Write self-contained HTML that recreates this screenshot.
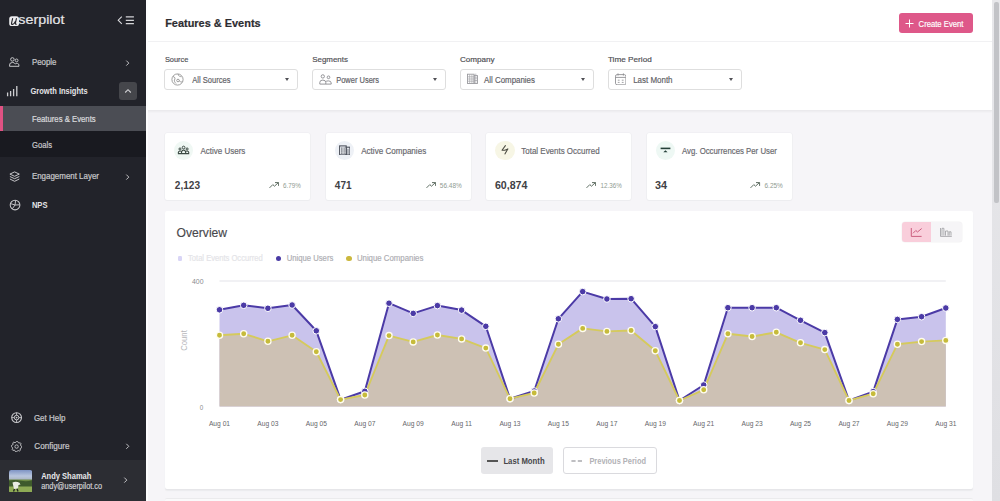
<!DOCTYPE html>
<html><head><meta charset="utf-8">
<style>
*{margin:0;padding:0;box-sizing:border-box}
html,body{width:1000px;height:501px;overflow:hidden;background:#f4f4f6;font-family:"Liberation Sans",sans-serif}
svg text{font-family:"Liberation Sans",sans-serif;white-space:pre}
.abs{position:absolute}
#sb{position:absolute;left:0;top:0;width:146px;height:501px;background:#22232a}
.sbt{position:absolute;color:#c9c9cc;font-size:8.6px;white-space:nowrap}
.sbb{font-weight:bold;color:#e6e6e8}
#main{position:absolute;left:146px;top:0;width:846px;height:501px;background:#f6f5f8}
#hdr{position:absolute;left:0;top:0;width:846px;height:110px;background:#fff;box-shadow:0 0.5px 0 #e9e9eb,0 2px 2px rgba(0,0,0,0.045)}
.lbl{position:absolute;font-size:8.2px;color:#555;white-space:nowrap}
.dd{position:absolute;width:134px;height:21.6px;border:1px solid #dedede;border-radius:3px;background:#fff}
.ddt{position:absolute;left:27px;top:5.5px;font-size:8.2px;color:#555;white-space:nowrap}
.caret{position:absolute;right:8.4px;top:8.4px;width:0;height:0;border-left:2.8px solid transparent;border-right:2.8px solid transparent;border-top:3px solid #505055}
.card{position:absolute;top:132.6px;width:145px;height:67.4px;background:#fff;border-radius:2px;box-shadow:0 0 0 0.6px #ececef,0 1px 1px rgba(0,0,0,0.03)}
.ci{position:absolute;left:9px;top:8px;width:19px;height:19px;border-radius:50%}
.ct{position:absolute;left:36px;top:13px;font-size:8.4px;color:#666;white-space:nowrap}
.cv{position:absolute;left:9px;top:47px;font-size:10.4px;font-weight:bold;color:#444;white-space:nowrap}
.cp{position:absolute;right:9px;top:49px;font-size:6px;color:#999;white-space:nowrap}
.tr{position:absolute;top:47px}
#ov{position:absolute;left:19px;top:210.5px;width:808px;height:278.5px;background:#fff;border-radius:2px;box-shadow:0 1px 0 #e6e6e9,0 2px 1px #ececee}
.xl{position:absolute;top:421.1px;font-size:6.7px;line-height:6.7px;color:#66666a;white-space:nowrap;transform:translateX(-50%)}
.tx{position:absolute;white-space:nowrap}
#scr{position:absolute;left:991.5px;top:0;width:8.5px;height:501px;background:linear-gradient(#e8e8eb,#dfdfe3)}
#thumb{position:absolute;left:994px;top:2px;width:4.5px;height:201px;background:#c2c3c7;border-radius:2px}
</style></head><body>
<div id="sb">
  <!-- logo -->
  <svg class="abs" style="left:9px;top:15.5px" width="11" height="11" viewBox="0 0 11 11">
    <rect x="0.2" y="0.3" width="9.8" height="9.8" rx="2.6" fill="#ececee"/>
    <path d="M3.6 2.6 L2.6 6.8 Q2.2 8.6 3.6 8.4 Q5.2 8.1 6.2 5.6 M7.4 2.6 L6.4 7 Q6.2 8.3 7.2 8.2" fill="none" stroke="#25252b" stroke-width="1.15" stroke-linecap="round"/>
  </svg>
  
  
  <!-- collapse icon -->
  <svg class="abs" style="left:110px;top:10px" width="30" height="20" viewBox="0 0 30 20">
    <path d="M11.8 6.6 L8.2 10.2 L11.8 13.8" fill="none" stroke="#dcdcdf" stroke-width="1.05"/>
    <path d="M15.8 6.9H23.9M15.8 10.4H23.9M15.8 13.6H23.9" stroke="#d4d4d7" stroke-width="1.25"/>
  </svg>
  <!-- People -->
  <svg class="abs" style="left:8px;top:56px" width="12" height="12" viewBox="0 0 12 12">
    <circle cx="4.4" cy="3.4" r="1.75" fill="none" stroke="#c6c6c9" stroke-width="1"/>
    <circle cx="8.6" cy="4.4" r="1.4" fill="none" stroke="#c6c6c9" stroke-width="1"/>
    <path d="M1.5 10.3 Q0.9 6.6 4.3 6.4 Q6.6 6.4 7.3 8 Q8 7.2 9.3 7.3 Q11.3 7.6 11 10.3 Z" fill="none" stroke="#c6c6c9" stroke-width="1" stroke-linejoin="round"/>
  </svg>
  <svg class="abs" style="left:125px;top:60px" width="6" height="7" viewBox="0 0 6 7"><path d="M1.3 0.6 L3.8 3.1 L1.3 5.6" fill="none" stroke="#c0c0c3" stroke-width="1"/></svg>
  <!-- Growth -->
  <svg class="abs" style="left:6px;top:85px" width="13" height="12" viewBox="0 0 13 12">
    <path d="M1.6 11.2V7.6M4.6 11.2V6.1M7.6 11.2V4.1M10.8 11.2V1.1" stroke="#cfcfd2" stroke-width="1.3"/>
  </svg>
  <div class="abs" style="left:119px;top:82px;width:17.5px;height:18px;background:#45464b;border-radius:3px"></div>
  <svg class="abs" style="left:124px;top:88px" width="8" height="6" viewBox="0 0 8 6"><path d="M1.2 4.5 L4 1.7 L6.8 4.5" fill="none" stroke="#d0d0d3" stroke-width="1.1"/></svg>
  <!-- submenu -->
  <div class="abs" style="left:0;top:106px;width:146px;height:25px;background:#4b4d54"></div>
  <div class="abs" style="left:0;top:106px;width:2.5px;height:25px;background:#e05283"></div>
  <div class="abs" style="left:0;top:131px;width:146px;height:26px;background:#191a20"></div>
  <!-- Engagement -->
  <svg class="abs" style="left:8.5px;top:170.5px" width="11.5" height="11.5" viewBox="0 0 11.5 11.5">
    <path d="M5.6 0.9 L10.3 3.1 L5.6 5.3 L0.9 3.1Z" fill="none" stroke="#c6c6c9" stroke-width="1" stroke-linejoin="round"/>
    <path d="M0.9 5.5 L5.6 7.7 L10.3 5.5 M0.9 8 L5.6 10.3 L10.3 8" fill="none" stroke="#c6c6c9" stroke-width="1" stroke-linejoin="round"/>
  </svg>
  <svg class="abs" style="left:125px;top:173.5px" width="6" height="7" viewBox="0 0 6 7"><path d="M1.3 0.6 L3.8 3.1 L1.3 5.6" fill="none" stroke="#c0c0c3" stroke-width="1"/></svg>
  <!-- NPS -->
  <svg class="abs" style="left:9px;top:198.5px" width="12" height="12" viewBox="0 0 12 12">
    <circle cx="6.05" cy="6" r="4.85" fill="none" stroke="#c6c6c9" stroke-width="1.05"/>
    <path d="M6.05 6 L6.6 1.3 M6.05 6 L1.8 4.7 M6.05 6 L10.8 5.8 M6.05 6 L3.3 9.8" fill="none" stroke="#c6c6c9" stroke-width="0.95"/>
  </svg>
  <!-- Get help -->
  <svg class="abs" style="left:10.9px;top:412.4px" width="11.2" height="11.2" viewBox="0 0 11.2 11.2">
    <circle cx="5.6" cy="5.6" r="4.9" fill="none" stroke="#c6c6c9" stroke-width="1.1"/>
    <circle cx="5.6" cy="5.6" r="2.3" fill="none" stroke="#c6c6c9" stroke-width="1"/>
    <circle cx="5.6" cy="5.6" r="0.9" fill="#c6c6c9"/>
    <path d="M5.6 0.7V3.3M5.6 7.9V10.5M0.7 5.6H3.3M7.9 5.6H10.5" stroke="#c6c6c9" stroke-width="0.9"/>
  </svg>
  <!-- Configure -->
  <svg class="abs" style="left:11px;top:440.6px" width="11.2" height="11.2" viewBox="0 0 11.2 11.2">
    <path d="M10.90 5.60 L10.80 6.63 L9.57 7.25 L9.18 7.99 L9.35 9.35 L8.54 10.01 L7.25 9.57 L6.44 9.82 L5.60 10.90 L4.57 10.80 L3.95 9.57 L3.21 9.18 L1.85 9.35 L1.19 8.54 L1.63 7.25 L1.38 6.44 L0.30 5.60 L0.40 4.57 L1.63 3.95 L2.02 3.21 L1.85 1.85 L2.66 1.19 L3.95 1.63 L4.76 1.38 L5.60 0.30 L6.63 0.40 L7.25 1.63 L7.99 2.02 L9.35 1.85 L10.01 2.66 L9.57 3.95 L9.82 4.76Z" fill="none" stroke="#c6c6c9" stroke-width="0.95" stroke-linejoin="round"/>
    <circle cx="5.6" cy="5.6" r="1.7" fill="none" stroke="#c6c6c9" stroke-width="0.9"/>
  </svg>
  <svg class="abs" style="left:125px;top:443px" width="6" height="7" viewBox="0 0 6 7"><path d="M1.3 0.8 L3.8 3.3 L1.3 5.8" fill="none" stroke="#c0c0c3" stroke-width="1"/></svg>
  <!-- user -->
  <div class="abs" style="left:0;top:460px;width:146px;height:41px;background:#2c2d33"></div>
  <svg class="abs" style="left:9px;top:469.5px" width="23.3" height="22.8" viewBox="0 0 23.3 22.8">
    <defs>
      <linearGradient id="sky" x1="0" y1="0" x2="0" y2="1"><stop offset="0" stop-color="#7e93c4"/><stop offset="0.6" stop-color="#b9c6de"/><stop offset="1" stop-color="#a9b3c0"/></linearGradient>
      <clipPath id="avc"><rect x="0" y="0" width="23.3" height="22.8" rx="2.2"/></clipPath>
    </defs>
    <g clip-path="url(#avc)">
      <rect x="0" y="0" width="23.3" height="10" fill="url(#sky)"/>
      <rect x="0" y="9.5" width="23.3" height="13.3" fill="#6d8a45"/>
      <path d="M0 10.5 Q6 9.6 12 10.8 T23.3 10.2 V18 H0Z" fill="#3e5a2c"/>
      <rect x="0" y="16.5" width="23.3" height="6.3" fill="#8eaa55"/>
      <path d="M3.5 12.5 Q7 11 10.5 12.8 L11.5 14.5 L9.5 15 L9 18.5 L5 19 Z" fill="#e9ebe2"/>
      <path d="M5.5 19 L4.5 21.5 M8 18.8 L9 21.5" stroke="#252a20" stroke-width="1.4"/>
    </g>
  </svg>
  <svg class="abs" style="left:123.2px;top:477.4px" width="6" height="7" viewBox="0 0 6 7"><path d="M1.3 0.6 L3.8 3.1 L1.3 5.6" fill="none" stroke="#c5c5c8" stroke-width="1"/></svg>
</div>

<div id="main">
  <div id="hdr">
    
    <div class="abs" style="left:0;top:41px;width:846px;height:1px;background:#f1f1f3"></div>
    <div class="abs" style="left:753px;top:13.2px;width:74px;height:19.6px;background:#de5889;border-radius:3px"></div>
    <svg class="abs" style="left:759px;top:18.5px" width="9" height="9" viewBox="0 0 9 9"><path d="M4.5 0.5V8.5M0.5 4.5H8.5" stroke="#fff" stroke-width="1"/></svg>
    

    <div class="dd" style="left:18px;top:68.5px">
      <svg class="abs" style="left:6px;top:3.5px" width="13" height="13" viewBox="0 0 13 13">
        <circle cx="6.5" cy="6.5" r="5.6" fill="none" stroke="#888" stroke-width="0.8"/>
        <path d="M2 3.5 C4 4 4.5 5.5 3.5 7 C3 8 4 9.5 5 10.5 M7 1 C7 3 9 3.5 10.5 3.8 M8 7.5 C9 8.5 10 9.5 11.5 8.5" fill="none" stroke="#888" stroke-width="0.8"/>
        <circle cx="7" cy="7.5" r="1.3" fill="none" stroke="#888" stroke-width="0.8"/>
      </svg>
      <div class="caret"></div>
    </div>
    <div class="dd" style="left:166px;top:68.5px">
      <svg class="abs" style="left:5.5px;top:4px" width="13" height="11" viewBox="0 0 13 11">
        <circle cx="3.8" cy="2.4" r="1.65" fill="none" stroke="#8a8a8e" stroke-width="0.9"/>
        <circle cx="9.5" cy="3.3" r="1.35" fill="none" stroke="#8a8a8e" stroke-width="0.9"/>
        <path d="M0.8 10.1 V8.4 Q0.8 6.1 3.8 6.1 Q6.8 6.1 6.8 8.4 V10.1 Z M6.8 7.6 Q7.4 6.9 9.5 6.9 Q12.2 6.9 12.2 9 V10.1 H6.8" fill="none" stroke="#8a8a8e" stroke-width="0.9" stroke-linejoin="round"/>
      </svg>
      <div class="caret"></div>
    </div>
    <div class="dd" style="left:314px;top:68.5px">
      <svg class="abs" style="left:6.2px;top:3.4px" width="11" height="11" viewBox="0 0 11 11">
        <rect x="0.5" y="1.2" width="6.6" height="9.3" fill="none" stroke="#9a9a9e" stroke-width="0.9"/>
        <rect x="7.1" y="2.6" width="3.4" height="7.9" fill="none" stroke="#9a9a9e" stroke-width="0.9"/>
        <path d="M2.7 1.5V10.2M4.9 1.5V10.2M8.8 2.8V10.2M0.8 3.8H6.8M0.8 6H6.8M0.8 8.2H6.8M7.3 5H10.3M7.3 7.5H10.3M8.8 2.6V0.6" stroke="#a5a5a9" stroke-width="0.7"/>
      </svg>
      <div class="caret"></div>
    </div>
    <div class="dd" style="left:462px;top:68.5px">
      <svg class="abs" style="left:5.6px;top:3.4px" width="11.5" height="12.5" viewBox="0 0 11.5 12.5">
        <rect x="0.5" y="1.6" width="10.4" height="10.2" rx="1.6" fill="none" stroke="#8a8a8e" stroke-width="0.85"/>
        <path d="M0.6 4.4H10.8M3 0.4V2.6M8.4 0.4V2.6" stroke="#8a8a8e" stroke-width="0.85"/>
        <path d="M2.8 7.2h1.8M2.8 9.4h1.8M6.8 7.2h1.8M6.8 9.4h1.8" stroke="#8a8a8e" stroke-width="0.8"/>
      </svg>
      <div class="caret"></div>
    </div>
  </div>

  <!-- cards -->
  <div class="card" style="left:19.0px"></div>
  <div class="card" style="left:179.7px"></div>
  <div class="card" style="left:340.3px"></div>
  <div class="card" style="left:501.0px"></div>
  <!-- overview -->
  <div id="ov"></div>
  <div class="abs" style="left:19px;top:497.5px;width:808px;height:10px;background:#fafafb;border-top:1px solid #ebebed;border-radius:2px"></div>
</div>

<!-- overview content in page coords -->

<div class="abs" style="left:901.7px;top:222.1px;width:60px;height:19.7px;border-radius:3px;background:#f6f5f7;box-shadow:0 0 0.5px 0.5px rgba(0,0,0,0.05)"></div>
<div class="abs" style="left:901.7px;top:222.1px;width:29.6px;height:19.7px;border-radius:3px 0 0 3px;background:#f9cedb"></div>
<svg class="abs" style="left:908px;top:225px" width="17" height="14" viewBox="0 0 17 14">
  <path d="M3.3 3V11.4H13.6" fill="none" stroke="#c9577a" stroke-width="0.95"/>
  <path d="M5 8.3 L7.8 5.5 L9.5 7 L13.7 3.5" fill="none" stroke="#c9577a" stroke-width="0.95"/>
</svg>
<svg class="abs" style="left:938px;top:225px" width="17" height="14" viewBox="0 0 17 14">
  <path d="M2.5 3V11.4H13.8" fill="none" stroke="#9c9ca0" stroke-width="0.8"/>
  <path d="M4 10.6V3.3H5.9V10.6M7.5 10.6V6H10V10.6M11.2 10.6V6.8H13V10.6" fill="none" stroke="#9c9ca0" stroke-width="0.8"/>
</svg>

<!-- legend -->
<div class="abs" style="left:178.1px;top:256.3px;width:4.3px;height:4.3px;border-radius:1.2px;background:#d9d5f6"></div>

<div class="abs" style="left:275.9px;top:255.7px;width:5.4px;height:5.4px;border-radius:50%;background:#4a3ba5"></div>

<div class="abs" style="left:346.3px;top:255.7px;width:5.4px;height:5.4px;border-radius:50%;background:#cbb83e"></div>


<!-- axes labels -->




<svg class="abs" style="left:0;top:0" width="1000" height="501" viewBox="0 0 1000 501">
<line x1="219.5" y1="281" x2="945.8" y2="281" stroke="#ededf0" stroke-width="1.3"/>
<polygon points="219.5,406.5 219.5,309.8 243.7,305.3 267.9,308.3 292.1,305.0 316.3,330.8 340.6,399.6 364.8,391.3 389.0,303.2 413.2,313.4 437.4,305.6 461.6,310.1 485.8,326.3 510.0,398.7 534.2,391.0 558.4,318.8 582.7,291.6 606.9,299.0 631.1,298.7 655.3,326.6 679.5,400.5 703.7,385.0 727.9,307.7 752.1,307.7 776.3,307.7 800.5,320.3 824.8,332.6 849.0,400.5 873.2,391.6 897.4,319.4 921.6,316.7 945.8,308.0 945.8,406.5" fill="#c9c3ec"/>
<polygon points="219.5,406.5 219.5,335.3 243.7,333.8 267.9,341.3 292.1,335.3 316.3,351.7 340.6,399.6 364.8,395.0 389.0,335.6 413.2,341.9 437.4,335.0 461.6,338.9 485.8,348.1 510.0,398.7 534.2,393.0 558.4,344.3 582.7,328.4 606.9,331.4 631.1,330.5 655.3,350.8 679.5,400.5 703.7,389.8 727.9,333.8 752.1,336.5 776.3,332.3 800.5,342.8 824.8,349.6 849.0,400.5 873.2,393.7 897.4,344.3 921.6,341.6 945.8,340.4 945.8,406.5" fill="#cdc1b4"/>
<polyline points="219.5,309.8 243.7,305.3 267.9,308.3 292.1,305.0 316.3,330.8 340.6,399.6 364.8,391.3 389.0,303.2 413.2,313.4 437.4,305.6 461.6,310.1 485.8,326.3 510.0,398.7 534.2,391.0 558.4,318.8 582.7,291.6 606.9,299.0 631.1,298.7 655.3,326.6 679.5,400.5 703.7,385.0 727.9,307.7 752.1,307.7 776.3,307.7 800.5,320.3 824.8,332.6 849.0,400.5 873.2,391.6 897.4,319.4 921.6,316.7 945.8,308.0" fill="none" stroke="#4b3aa6" stroke-width="2" stroke-linejoin="round"/>
<polyline points="219.5,335.3 243.7,333.8 267.9,341.3 292.1,335.3 316.3,351.7 340.6,399.6 364.8,395.0 389.0,335.6 413.2,341.9 437.4,335.0 461.6,338.9 485.8,348.1 510.0,398.7 534.2,393.0 558.4,344.3 582.7,328.4 606.9,331.4 631.1,330.5 655.3,350.8 679.5,400.5 703.7,389.8 727.9,333.8 752.1,336.5 776.3,332.3 800.5,342.8 824.8,349.6 849.0,400.5 873.2,393.7 897.4,344.3 921.6,341.6 945.8,340.4" fill="none" stroke="#d5ca5c" stroke-width="1.9" stroke-linejoin="round"/>
<circle cx="219.5" cy="309.8" r="3.3" fill="#4b3aa6" stroke="#fff" stroke-width="1"/>
<circle cx="243.7" cy="305.3" r="3.3" fill="#4b3aa6" stroke="#fff" stroke-width="1"/>
<circle cx="267.9" cy="308.3" r="3.3" fill="#4b3aa6" stroke="#fff" stroke-width="1"/>
<circle cx="292.1" cy="305.0" r="3.3" fill="#4b3aa6" stroke="#fff" stroke-width="1"/>
<circle cx="316.3" cy="330.8" r="3.3" fill="#4b3aa6" stroke="#fff" stroke-width="1"/>
<circle cx="340.6" cy="399.6" r="3.3" fill="#4b3aa6" stroke="#fff" stroke-width="1"/>
<circle cx="364.8" cy="391.3" r="3.3" fill="#4b3aa6" stroke="#fff" stroke-width="1"/>
<circle cx="389.0" cy="303.2" r="3.3" fill="#4b3aa6" stroke="#fff" stroke-width="1"/>
<circle cx="413.2" cy="313.4" r="3.3" fill="#4b3aa6" stroke="#fff" stroke-width="1"/>
<circle cx="437.4" cy="305.6" r="3.3" fill="#4b3aa6" stroke="#fff" stroke-width="1"/>
<circle cx="461.6" cy="310.1" r="3.3" fill="#4b3aa6" stroke="#fff" stroke-width="1"/>
<circle cx="485.8" cy="326.3" r="3.3" fill="#4b3aa6" stroke="#fff" stroke-width="1"/>
<circle cx="510.0" cy="398.7" r="3.3" fill="#4b3aa6" stroke="#fff" stroke-width="1"/>
<circle cx="534.2" cy="391.0" r="3.3" fill="#4b3aa6" stroke="#fff" stroke-width="1"/>
<circle cx="558.4" cy="318.8" r="3.3" fill="#4b3aa6" stroke="#fff" stroke-width="1"/>
<circle cx="582.7" cy="291.6" r="3.3" fill="#4b3aa6" stroke="#fff" stroke-width="1"/>
<circle cx="606.9" cy="299.0" r="3.3" fill="#4b3aa6" stroke="#fff" stroke-width="1"/>
<circle cx="631.1" cy="298.7" r="3.3" fill="#4b3aa6" stroke="#fff" stroke-width="1"/>
<circle cx="655.3" cy="326.6" r="3.3" fill="#4b3aa6" stroke="#fff" stroke-width="1"/>
<circle cx="679.5" cy="400.5" r="3.3" fill="#4b3aa6" stroke="#fff" stroke-width="1"/>
<circle cx="703.7" cy="385.0" r="3.3" fill="#4b3aa6" stroke="#fff" stroke-width="1"/>
<circle cx="727.9" cy="307.7" r="3.3" fill="#4b3aa6" stroke="#fff" stroke-width="1"/>
<circle cx="752.1" cy="307.7" r="3.3" fill="#4b3aa6" stroke="#fff" stroke-width="1"/>
<circle cx="776.3" cy="307.7" r="3.3" fill="#4b3aa6" stroke="#fff" stroke-width="1"/>
<circle cx="800.5" cy="320.3" r="3.3" fill="#4b3aa6" stroke="#fff" stroke-width="1"/>
<circle cx="824.8" cy="332.6" r="3.3" fill="#4b3aa6" stroke="#fff" stroke-width="1"/>
<circle cx="849.0" cy="400.5" r="3.3" fill="#4b3aa6" stroke="#fff" stroke-width="1"/>
<circle cx="873.2" cy="391.6" r="3.3" fill="#4b3aa6" stroke="#fff" stroke-width="1"/>
<circle cx="897.4" cy="319.4" r="3.3" fill="#4b3aa6" stroke="#fff" stroke-width="1"/>
<circle cx="921.6" cy="316.7" r="3.3" fill="#4b3aa6" stroke="#fff" stroke-width="1"/>
<circle cx="945.8" cy="308.0" r="3.3" fill="#4b3aa6" stroke="#fff" stroke-width="1"/>
<circle cx="219.5" cy="335.3" r="3.1" fill="#c6bb3b" stroke="#fffdf0" stroke-width="1.3"/>
<circle cx="243.7" cy="333.8" r="3.1" fill="#c6bb3b" stroke="#fffdf0" stroke-width="1.3"/>
<circle cx="267.9" cy="341.3" r="3.1" fill="#c6bb3b" stroke="#fffdf0" stroke-width="1.3"/>
<circle cx="292.1" cy="335.3" r="3.1" fill="#c6bb3b" stroke="#fffdf0" stroke-width="1.3"/>
<circle cx="316.3" cy="351.7" r="3.1" fill="#c6bb3b" stroke="#fffdf0" stroke-width="1.3"/>
<circle cx="340.6" cy="399.6" r="3.1" fill="#c6bb3b" stroke="#fffdf0" stroke-width="1.3"/>
<circle cx="364.8" cy="395.0" r="3.1" fill="#c6bb3b" stroke="#fffdf0" stroke-width="1.3"/>
<circle cx="389.0" cy="335.6" r="3.1" fill="#c6bb3b" stroke="#fffdf0" stroke-width="1.3"/>
<circle cx="413.2" cy="341.9" r="3.1" fill="#c6bb3b" stroke="#fffdf0" stroke-width="1.3"/>
<circle cx="437.4" cy="335.0" r="3.1" fill="#c6bb3b" stroke="#fffdf0" stroke-width="1.3"/>
<circle cx="461.6" cy="338.9" r="3.1" fill="#c6bb3b" stroke="#fffdf0" stroke-width="1.3"/>
<circle cx="485.8" cy="348.1" r="3.1" fill="#c6bb3b" stroke="#fffdf0" stroke-width="1.3"/>
<circle cx="510.0" cy="398.7" r="3.1" fill="#c6bb3b" stroke="#fffdf0" stroke-width="1.3"/>
<circle cx="534.2" cy="393.0" r="3.1" fill="#c6bb3b" stroke="#fffdf0" stroke-width="1.3"/>
<circle cx="558.4" cy="344.3" r="3.1" fill="#c6bb3b" stroke="#fffdf0" stroke-width="1.3"/>
<circle cx="582.7" cy="328.4" r="3.1" fill="#c6bb3b" stroke="#fffdf0" stroke-width="1.3"/>
<circle cx="606.9" cy="331.4" r="3.1" fill="#c6bb3b" stroke="#fffdf0" stroke-width="1.3"/>
<circle cx="631.1" cy="330.5" r="3.1" fill="#c6bb3b" stroke="#fffdf0" stroke-width="1.3"/>
<circle cx="655.3" cy="350.8" r="3.1" fill="#c6bb3b" stroke="#fffdf0" stroke-width="1.3"/>
<circle cx="679.5" cy="400.5" r="3.1" fill="#c6bb3b" stroke="#fffdf0" stroke-width="1.3"/>
<circle cx="703.7" cy="389.8" r="3.1" fill="#c6bb3b" stroke="#fffdf0" stroke-width="1.3"/>
<circle cx="727.9" cy="333.8" r="3.1" fill="#c6bb3b" stroke="#fffdf0" stroke-width="1.3"/>
<circle cx="752.1" cy="336.5" r="3.1" fill="#c6bb3b" stroke="#fffdf0" stroke-width="1.3"/>
<circle cx="776.3" cy="332.3" r="3.1" fill="#c6bb3b" stroke="#fffdf0" stroke-width="1.3"/>
<circle cx="800.5" cy="342.8" r="3.1" fill="#c6bb3b" stroke="#fffdf0" stroke-width="1.3"/>
<circle cx="824.8" cy="349.6" r="3.1" fill="#c6bb3b" stroke="#fffdf0" stroke-width="1.3"/>
<circle cx="849.0" cy="400.5" r="3.1" fill="#c6bb3b" stroke="#fffdf0" stroke-width="1.3"/>
<circle cx="873.2" cy="393.7" r="3.1" fill="#c6bb3b" stroke="#fffdf0" stroke-width="1.3"/>
<circle cx="897.4" cy="344.3" r="3.1" fill="#c6bb3b" stroke="#fffdf0" stroke-width="1.3"/>
<circle cx="921.6" cy="341.6" r="3.1" fill="#c6bb3b" stroke="#fffdf0" stroke-width="1.3"/>
<circle cx="945.8" cy="340.4" r="3.1" fill="#c6bb3b" stroke="#fffdf0" stroke-width="1.3"/>
</svg>
<div class="xl" style="left:219.5px">Aug 01</div>
<div class="xl" style="left:267.9px">Aug 03</div>
<div class="xl" style="left:316.3px">Aug 05</div>
<div class="xl" style="left:364.8px">Aug 07</div>
<div class="xl" style="left:413.2px">Aug 09</div>
<div class="xl" style="left:461.6px">Aug 11</div>
<div class="xl" style="left:510.0px">Aug 13</div>
<div class="xl" style="left:558.4px">Aug 15</div>
<div class="xl" style="left:606.9px">Aug 17</div>
<div class="xl" style="left:655.3px">Aug 19</div>
<div class="xl" style="left:703.7px">Aug 21</div>
<div class="xl" style="left:752.1px">Aug 23</div>
<div class="xl" style="left:800.5px">Aug 25</div>
<div class="xl" style="left:849.0px">Aug 27</div>
<div class="xl" style="left:897.4px">Aug 29</div>
<div class="xl" style="left:945.8px">Aug 31</div>

<!-- bottom buttons -->
<div class="abs" style="left:481px;top:447.2px;width:72px;height:26.8px;background:#e6e6e9;border-radius:3px"></div>
<div class="abs" style="left:487px;top:460px;width:11px;height:2px;background:#555"></div>

<div class="abs" style="left:563px;top:447.2px;width:93.8px;height:27.2px;background:#fff;border:1px solid #dadade;border-radius:3px"></div>
<svg class="abs" style="left:571px;top:460px" width="12" height="2" viewBox="0 0 12 2"><path d="M0.4 1H4.6M6.8 1H11" stroke="#ababaf" stroke-width="1.5"/></svg>


<div class="abs" style="left:173.8px;top:140.7px;width:19.6px;height:19.6px;border-radius:50%;background:#f0f8f4"></div>
<svg class="abs" style="left:177px;top:145px" width="13" height="10" viewBox="0 0 13 10">
    <circle cx="6.6" cy="2.5" r="1.35" fill="none" stroke="#3b4a43" stroke-width="1"/>
    <circle cx="3" cy="4" r="1.05" fill="none" stroke="#3b4a43" stroke-width="1"/>
    <circle cx="10.1" cy="4" r="1.05" fill="none" stroke="#3b4a43" stroke-width="1"/>
    <path d="M4.4 8.3 Q4.6 5.2 6.6 5.1 Q8.6 5.2 8.8 8.3 M1.2 8.3 Q1.3 5.9 3 5.9 Q3.9 5.9 4.5 6.5 M11.9 8.3 Q11.8 5.9 10.1 5.9 Q9.2 5.9 8.6 6.5 M0.9 8.6 H12.2" fill="none" stroke="#3b4a43" stroke-width="1.05"/>
  </svg>
<svg class="abs" style="left:268.8px;top:181.8px" width="10.5" height="6.5" viewBox="0 0 10.5 6.5"><path d="M0.5 5.9 L3.8 2.6 L5.5 4.2 L9.4 0.6 M6 0.6H9.6V3.9" fill="none" stroke="#5f6e63" stroke-width="1"/></svg>
<div class="abs" style="left:334.5px;top:140.7px;width:19.6px;height:19.6px;border-radius:50%;background:#eef1f6"></div>
<svg class="abs" style="left:338.8px;top:144.8px" width="11.5" height="10.2" viewBox="0 0 11.5 10.2">
    <rect x="0.6" y="0.9" width="6.6" height="9" fill="none" stroke="#4d525c" stroke-width="1.1"/>
    <rect x="7.2" y="2.2" width="3.7" height="7.7" fill="none" stroke="#4d525c" stroke-width="1.1"/>
    <path d="M2.5 2.5V9M3.9 2.5V9M5.3 2.5V9M9 3.8V9" stroke="#4d525c" stroke-width="0.75"/>
    <path d="M1 4h6M1 6h6M1 7.8h6" stroke="#fff" stroke-width="0.5"/>
  </svg>
<svg class="abs" style="left:425.6px;top:181.8px" width="10.5" height="6.5" viewBox="0 0 10.5 6.5"><path d="M0.5 5.9 L3.8 2.6 L5.5 4.2 L9.4 0.6 M6 0.6H9.6V3.9" fill="none" stroke="#5f6e63" stroke-width="1"/></svg>
<div class="abs" style="left:495.1px;top:140.7px;width:19.6px;height:19.6px;border-radius:50%;background:#f7f6e5"></div>
<svg class="abs" style="left:500.5px;top:145px" width="8" height="9.5" viewBox="0 0 8 9.5">
    <path d="M4.4 0.6 L1 5.2 H4 M6.8 3.9 L3.9 8.9 M3.8 5.2 L6.9 3.9" fill="none" stroke="#4a4a40" stroke-width="1.05" stroke-linecap="round" stroke-linejoin="round"/>
  </svg>
<svg class="abs" style="left:585.6px;top:181.8px" width="10.5" height="6.5" viewBox="0 0 10.5 6.5"><path d="M0.5 5.9 L3.8 2.6 L5.5 4.2 L9.4 0.6 M6 0.6H9.6V3.9" fill="none" stroke="#5f6e63" stroke-width="1"/></svg>
<div class="abs" style="left:655.8px;top:140.7px;width:19.6px;height:19.6px;border-radius:50%;background:#eef8f4"></div>
<svg class="abs" style="left:659.5px;top:146.5px" width="11" height="6" viewBox="0 0 11 6">
    <path d="M0.6 1.4H10.4" stroke="#243f38" stroke-width="1.6"/>
    <path d="M3.3 5.3 L5.4 3.2 L7.6 5.3Z" fill="#243f38"/>
  </svg>
<svg class="abs" style="left:750.0px;top:181.8px" width="10.5" height="6.5" viewBox="0 0 10.5 6.5"><path d="M0.5 5.9 L3.8 2.6 L5.5 4.2 L9.4 0.6 M6 0.6H9.6V3.9" fill="none" stroke="#5f6e63" stroke-width="1"/></svg>
<svg class="abs" style="left:0;top:0" width="1000" height="501" viewBox="0 0 1000 501">
<text x="18.30" y="24.00" font-size="13.2" fill="#e6e6e8" textLength="46.14" lengthAdjust="spacingAndGlyphs" stroke="#e6e6e8" stroke-width="0.18">serpilot</text>
<text x="31.90" y="65.10" font-size="8.4" fill="#c6c6c9" textLength="24.48" lengthAdjust="spacingAndGlyphs" stroke="#c6c6c9" stroke-width="0.22">People</text>
<text x="30.50" y="94.10" font-size="8.4" fill="#e4e4e6" textLength="57.19" lengthAdjust="spacingAndGlyphs" font-weight="bold">Growth Insights</text>
<text x="32.00" y="122.20" font-size="8.4" fill="#d8d8db" textLength="63.67" lengthAdjust="spacingAndGlyphs" stroke="#d8d8db" stroke-width="0.22">Features &amp; Events</text>
<text x="32.00" y="147.80" font-size="8.4" fill="#c6c6c9" textLength="19.97" lengthAdjust="spacingAndGlyphs" stroke="#c6c6c9" stroke-width="0.22">Goals</text>
<text x="31.90" y="179.20" font-size="8.4" fill="#c6c6c9" textLength="67.10" lengthAdjust="spacingAndGlyphs" stroke="#c6c6c9" stroke-width="0.22">Engagement Layer</text>
<text x="31.90" y="207.90" font-size="8.4" fill="#e4e4e6" textLength="15.62" lengthAdjust="spacingAndGlyphs" font-weight="bold">NPS</text>
<text x="33.90" y="421.10" font-size="8.2" fill="#c6c6c9" textLength="31.47" lengthAdjust="spacingAndGlyphs" stroke="#c6c6c9" stroke-width="0.22">Get Help</text>
<text x="34.30" y="448.80" font-size="8.2" fill="#c6c6c9" textLength="35.26" lengthAdjust="spacingAndGlyphs" stroke="#c6c6c9" stroke-width="0.22">Configure</text>
<text x="41.20" y="478.80" font-size="8.5" fill="#e8e8ea" textLength="50.17" lengthAdjust="spacingAndGlyphs" font-weight="bold">Andy Shamah</text>
<text x="41.20" y="489.00" font-size="8.4" fill="#d2d2d5" textLength="60.90" lengthAdjust="spacingAndGlyphs" stroke="#d2d2d5" stroke-width="0.18">andy@userpilot.co</text>
<text x="165.20" y="27.20" font-size="11.2" fill="#2d2d31" textLength="95.42" lengthAdjust="spacingAndGlyphs" font-weight="bold" stroke="#2d2d31" stroke-width="0.2">Features &amp; Events</text>
<text x="918.60" y="26.50" font-size="8.5" fill="#ffffff" textLength="44.82" lengthAdjust="spacingAndGlyphs" stroke="#ffffff" stroke-width="0.18">Create Event</text>
<text x="164.90" y="61.80" font-size="8.0" fill="#505055" textLength="23.49" lengthAdjust="spacingAndGlyphs" stroke="#505055" stroke-width="0.18">Source</text>
<text x="312.20" y="61.80" font-size="8.0" fill="#505055" textLength="35.70" lengthAdjust="spacingAndGlyphs" stroke="#505055" stroke-width="0.18">Segments</text>
<text x="459.90" y="61.80" font-size="8.0" fill="#505055" textLength="34.70" lengthAdjust="spacingAndGlyphs" stroke="#505055" stroke-width="0.18">Company</text>
<text x="607.90" y="61.80" font-size="8.0" fill="#505055" textLength="43.86" lengthAdjust="spacingAndGlyphs" stroke="#505055" stroke-width="0.18">Time Period</text>
<text x="192.20" y="83.00" font-size="8.5" fill="#626267" textLength="38.32" lengthAdjust="spacingAndGlyphs" stroke="#626267" stroke-width="0.18">All Sources</text>
<text x="336.20" y="83.00" font-size="8.5" fill="#626267" textLength="42.92" lengthAdjust="spacingAndGlyphs" stroke="#626267" stroke-width="0.18">Power Users</text>
<text x="484.00" y="83.00" font-size="8.5" fill="#626267" textLength="50.93" lengthAdjust="spacingAndGlyphs" stroke="#626267" stroke-width="0.18">All Companies</text>
<text x="633.20" y="83.00" font-size="8.5" fill="#626267" textLength="39.34" lengthAdjust="spacingAndGlyphs" stroke="#626267" stroke-width="0.18">Last Month</text>
<text x="200.50" y="153.80" font-size="8.6" fill="#69696e" textLength="44.78" lengthAdjust="spacingAndGlyphs" stroke="#69696e" stroke-width="0.18">Active Users</text>
<text x="361.20" y="153.80" font-size="8.6" fill="#69696e" textLength="64.98" lengthAdjust="spacingAndGlyphs" stroke="#69696e" stroke-width="0.18">Active Companies</text>
<text x="521.30" y="153.80" font-size="8.6" fill="#69696e" textLength="78.30" lengthAdjust="spacingAndGlyphs" stroke="#69696e" stroke-width="0.18">Total Events Occurred</text>
<text x="682.00" y="153.80" font-size="8.6" fill="#69696e" textLength="94.87" lengthAdjust="spacingAndGlyphs" stroke="#69696e" stroke-width="0.18">Avg. Occurrences Per User</text>
<text x="174.80" y="188.90" font-size="10.0" fill="#414145" textLength="25.26" lengthAdjust="spacingAndGlyphs" font-weight="bold">2,123</text>
<text x="334.80" y="188.90" font-size="10.0" fill="#414145" textLength="16.76" lengthAdjust="spacingAndGlyphs" font-weight="bold">471</text>
<text x="494.90" y="188.90" font-size="10.0" fill="#414145" textLength="32.53" lengthAdjust="spacingAndGlyphs" font-weight="bold">60,874</text>
<text x="655.00" y="188.90" font-size="10.0" fill="#414145" textLength="12.03" lengthAdjust="spacingAndGlyphs" font-weight="bold">34</text>
<text x="283.10" y="187.80" font-size="6.6" fill="#8f9b92" textLength="17.77" lengthAdjust="spacingAndGlyphs">6.79%</text>
<text x="439.80" y="187.80" font-size="6.6" fill="#8f9b92" textLength="21.97" lengthAdjust="spacingAndGlyphs">56.48%</text>
<text x="600.50" y="187.80" font-size="6.6" fill="#8f9b92" textLength="21.27" lengthAdjust="spacingAndGlyphs">12.36%</text>
<text x="764.50" y="187.80" font-size="6.6" fill="#8f9b92" textLength="18.37" lengthAdjust="spacingAndGlyphs">6.25%</text>
<text x="176.60" y="237.40" font-size="12.6" fill="#48484c" textLength="50.53" lengthAdjust="spacingAndGlyphs" stroke="#48484c" stroke-width="0.15">Overview</text>
<text x="188.00" y="261.10" font-size="8.2" fill="#e4e4e8" textLength="74.69" lengthAdjust="spacingAndGlyphs" stroke="#e4e4e8" stroke-width="0.18">Total Events Occurred</text>
<text x="286.80" y="261.10" font-size="8.2" fill="#aeaeb3" textLength="46.49" lengthAdjust="spacingAndGlyphs" stroke="#aeaeb3" stroke-width="0.18">Unique Users</text>
<text x="356.90" y="261.10" font-size="8.2" fill="#aeaeb3" textLength="66.49" lengthAdjust="spacingAndGlyphs" stroke="#aeaeb3" stroke-width="0.18">Unique Companies</text>
<text x="192.00" y="283.80" font-size="7.0" fill="#8a8a8e" textLength="11.49" lengthAdjust="spacingAndGlyphs">400</text>
<text x="199.80" y="409.80" font-size="7.0" fill="#8a8a8e" textLength="3.50" lengthAdjust="spacingAndGlyphs">0</text>
<text x="503.40" y="464.40" font-size="8.6" fill="#46464a" textLength="41.22" lengthAdjust="spacingAndGlyphs" font-weight="bold">Last Month</text>
<text x="589.40" y="464.40" font-size="8.6" fill="#b2b2b6" textLength="56.62" lengthAdjust="spacingAndGlyphs" font-weight="bold">Previous Period</text>
<text x="-350.80" y="187.00" font-size="8.4" fill="#b6b6ba" textLength="20.58" lengthAdjust="spacingAndGlyphs" transform="rotate(-90)">Count</text>
</svg>
<div class="abs" style="left:146px;top:0;width:1.5px;height:501px;background:#fdfdfe"></div>
<div id="scr"></div>
<div id="thumb"></div>
</body></html>
